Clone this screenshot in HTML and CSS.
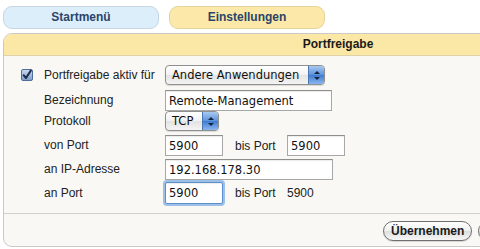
FILE: index.html
```html
<!DOCTYPE html>
<html lang="de">
<head>
    <meta charset="UTF-8">
    <meta name="viewport" content="width=device-width, initial-scale=1.0">
    <title>Portfreigabe</title>
    <link rel="stylesheet" href="styles.css">
</head>
<body>
    <div class="tabs">
        <div class="tab tab-start">Startmenü</div>
        <div class="tab tab-settings">Einstellungen</div>
    </div>
    <div class="panel">
        <div class="panel-header">Portfreigabe</div>
        <div class="form">
            <div class="check">
                <svg width="12" height="12" viewBox="0 0 12 12">
                    <defs>
                        <linearGradient id="cb" x1="0" y1="0" x2="0" y2="1">
                            <stop offset="0" stop-color="#c9d9ef"/>
                            <stop offset="1" stop-color="#7e9cc8"/>
                        </linearGradient>
                    </defs>
                    <rect x="0.5" y="0.5" width="11" height="11" rx="1.5" fill="url(#cb)" stroke="#4f6e9c"/>
                    <path d="M2.6 6.2 L5 9 L9.8 1.6" fill="none" stroke="#1d2c4a" stroke-width="2" stroke-linecap="round" stroke-linejoin="round"/>
                </svg>
            </div>
            <label class="label l20">Portfreigabe aktiv für</label>
            <div class="control">
                <div class="popup popup-wide">
                    <span class="popup-text">Andere Anwendungen</span>
                    <span class="popup-arrows"><i class="up"></i><i class="down"></i></span>
                </div>
            </div>

            <div></div>
            <label class="label l21">Bezeichnung</label>
            <div class="control"><div class="field field-name">Remote-Management</div></div>

            <div></div>
            <label class="label l20">Protokoll</label>
            <div class="control">
                <div class="popup popup-small">
                    <span class="popup-text">TCP</span>
                    <span class="popup-arrows"><i class="up"></i><i class="down"></i></span>
                </div>
            </div>

            <div></div>
            <label class="label l21">von Port</label>
            <div class="control">
                <div class="field field-port">5900</div>
                <span class="sub-label">bis Port</span>
                <div class="field field-port2">5900</div>
            </div>

            <div></div>
            <label class="label l21">an IP-Adresse</label>
            <div class="control"><div class="field field-ip">192.168.178.30</div></div>

            <div></div>
            <label class="label l22">an Port</label>
            <div class="control">
                <div class="field field-port focus">5900</div>
                <span class="sub-label">bis Port</span>
                <span class="sub-value">5900</span>
            </div>
        </div>
        <div class="panel-footer">
            <button class="btn">Übernehmen</button>
            <button class="btn btn-cut" aria-label="Abbrechen"></button>
        </div>
    </div>
</body>
</html>
```

FILE: styles.css
```css
* {
    margin: 0;
    padding: 0;
    box-sizing: border-box;
}
body {
    font-family: 'Liberation Sans', Arial, sans-serif;
    font-size: 12px;
    color: #1c1c1c;
    background: #fff;
    padding: 6px 0 0 3px;
    width: 480px;
    height: 249px;
    overflow: hidden;
}
.tabs {
    display: flex;
    gap: 10px;
}
.tab {
    width: 156px;
    height: 23px;
    line-height: 21px;
    text-align: center;
    font-weight: bold;
    color: #2b4468;
    border-radius: 9px;
}
.tab-start {
    background: #ddeefb;
    border: 1px solid #c6d6e2;
}
.tab-settings {
    background: #fce9a9;
    border: 1px solid #e3d49c;
}
.panel {
    margin-top: 4px;
    width: 670px;
    height: 214px;
    background: #f9f8f4;
    border: 1px solid #c9c9c6;
    border-radius: 9px;
    overflow: hidden;
}
.panel-header {
    height: 22px;
    line-height: 21px;
    background: #fce8a6;
    border-bottom: 1px solid #ddd2aa;
    text-align: center;
    font-weight: bold;
    color: #1a1a1a;
}
.form {
    display: grid;
    grid-template-columns: 23px 121px 1fr;
    grid-template-rows: 25px 21px 24px 24px 23px 22px;
    align-items: start;
    padding: 9px 0 0 17px;
    height: 158px;
    border-bottom: 1px solid #cfcfcc;
}
.check {
    height: 20px;
    display: flex;
    align-items: center;
}
.check svg {
    display: block;
}
.label {
    color: #222;
}
.l20 { line-height: 20px; }
.l21 { line-height: 21px; }
.l22 { line-height: 22px; }
.control {
    display: flex;
    align-items: center;
}
.field {
    height: 21px;
    line-height: 20px;
    padding-left: 3px;
    background: #fff;
    border: 1px solid #a7a7a7;
    border-top-color: #8e8e8e;
    box-shadow: inset 0 1px 1px rgba(0, 0, 0, 0.08);
    font-family: 'DejaVu Sans', sans-serif;
    font-size: 11.5px;
    color: #111;
}
.field-name { width: 167px; }
.field-ip { width: 168px; }
.field-port { width: 58px; }
.field-port2 { width: 58px; }
.field.focus {
    height: 22px;
    border: 1px solid #5d8fca;
    border-radius: 2px;
    box-shadow: 0 0 0 2px #9cc0e8, inset 0 1px 1px rgba(0, 0, 0, 0.08);
}
.sub-label {
    width: 52px;
    margin-left: 12px;
    color: #222;
}
.sub-value {
    color: #222;
}
.popup {
    height: 20px;
    display: flex;
    align-items: stretch;
    border: 1px solid #8f8f8f;
    border-radius: 4px;
    background: linear-gradient(#ffffff, #f1f1f1 50%, #e3e3e3 51%, #f4f4f4);
    box-shadow: 0 1px 1px rgba(0, 0, 0, 0.12);
    overflow: hidden;
}
.popup-wide { width: 160px; }
.popup-small { width: 54px; }
.popup-text {
    flex: 1;
    line-height: 18px;
    padding-left: 6px;
    font-family: 'DejaVu Sans', sans-serif;
    font-size: 11.5px;
    color: #111;
}
.popup-arrows {
    width: 16px;
    display: flex;
    flex-direction: column;
    align-items: center;
    justify-content: center;
    gap: 3px;
    background: linear-gradient(#a9c8f0, #5b92dc 50%, #3f7ad0 51%, #8ab6ee);
    border-left: 1px solid #4a76b4;
}
.popup-arrows i {
    display: block;
    width: 0;
    height: 0;
    border-left: 3px solid transparent;
    border-right: 3px solid transparent;
}
.popup-arrows .up {
    border-bottom: 3px solid #15233d;
}
.popup-arrows .down {
    border-top: 3px solid #15233d;
}
.panel-footer {
    display: flex;
    gap: 6px;
    padding: 7px 0 0 379px;
}
.btn {
    height: 20px;
    padding: 0 7px;
    border: 1px solid #6f6f6f;
    border-radius: 10px;
    background: linear-gradient(#ffffff, #f0f0f0 50%, #dedede 51%, #f6f6f6);
    box-shadow: 0 1px 1px rgba(0, 0, 0, 0.15);
    font-family: 'Liberation Sans', Arial, sans-serif;
    font-weight: bold;
    font-size: 12px;
    color: #1a1a1a;
}
.btn-cut {
    width: 80px;
}
```
